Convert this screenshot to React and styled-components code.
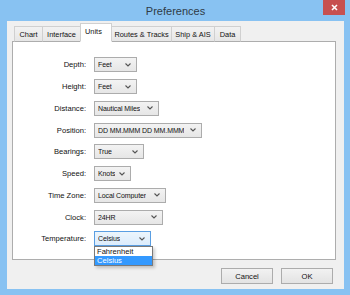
import styled, { createGlobalStyle } from "styled-components";

const GlobalStyle = createGlobalStyle`
  html, body {
    margin: 0;
    padding: 0;
    background: #88c2f2;
  }
  * {
    box-sizing: border-box;
  }
`;

const tabs = ["Chart", "Interface", "Units", "Routes & Tracks", "Ship & AIS", "Data"];
const tabWidths = [29, 39, 32, 61, 44, 27];

const rows = [
  { label: "Depth:", value: "Feet", width: 43 },
  { label: "Height:", value: "Feet", width: 43 },
  { label: "Distance:", value: "Nautical Miles", width: 65 },
  { label: "Position:", value: "DD MM.MMM DD MM.MMM", width: 108 },
  { label: "Bearings:", value: "True", width: 50 },
  { label: "Speed:", value: "Knots", width: 37 },
  { label: "Time Zone:", value: "Local Computer", width: 72 },
  { label: "Clock:", value: "24HR", width: 69 },
  { label: "Temperature:", value: "Celsius", width: 57, open: true },
];

const Chevron = () => (
  <ChevronIcon width="6" height="4" viewBox="0 0 6 4">
    <path d="M0.5 0.5 L3 3 L5.5 0.5" fill="none" stroke="#555" strokeWidth="1.1" />
  </ChevronIcon>
);

const App = () => {
  return (
    <>
      <GlobalStyle />
      <Window>
        <TitleBar>
          <Title>Preferences</Title>
          <CloseButton>
            <svg width="7" height="7" viewBox="0 0 7 7">
              <path d="M1 1 L6 6 M6 1 L1 6" stroke="#fff" strokeWidth="1.6" />
            </svg>
          </CloseButton>
        </TitleBar>
        <Client>
          <TabStrip>
            {tabs.map((t, i) => (
              <Tab key={t} $active={t === "Units"} $w={tabWidths[i]}>
                {t}
              </Tab>
            ))}
          </TabStrip>
          <Panel>
            <Form>
              {rows.map((r) => (
                <Row key={r.label}>
                  <Label>{r.label}</Label>
                  <SelectWrap>
                    <Select $w={r.width} $focus={r.open}>
                      <SelectText>{r.value}</SelectText>
                      <Chevron />
                    </Select>
                    {r.open && (
                      <DropList>
                        <Option>Fahrenheit</Option>
                        <Option $selected>Celsius</Option>
                      </DropList>
                    )}
                  </SelectWrap>
                </Row>
              ))}
            </Form>
          </Panel>
          <ButtonRow>
            <Button>Cancel</Button>
            <Button>OK</Button>
          </ButtonRow>
        </Client>
      </Window>
    </>
  );
};

export default App;

const Window = styled.div`
  width: 350px;
  height: 295px;
  background: #88c2f2;
  padding: 0 6px 6px 7px;
  display: flex;
  flex-direction: column;
  font-family: "Liberation Sans", Arial, sans-serif;
`;

const TitleBar = styled.div`
  position: relative;
  height: 21px;
  display: flex;
  align-items: center;
  justify-content: center;
`;

const Title = styled.div`
  font-size: 11px;
  color: #2f3a45;
  padding-top: 1px;
`;

const CloseButton = styled.div`
  position: absolute;
  top: 0;
  right: -1px;
  width: 22px;
  height: 15px;
  background: #c75050;
  display: flex;
  align-items: center;
  justify-content: center;
`;

const Client = styled.div`
  flex: 1;
  background: #f0f0f0;
  padding: 2px 8px 0 5px;
  display: flex;
  flex-direction: column;
`;

const TabStrip = styled.div`
  display: flex;
  align-items: flex-end;
  height: 19px;
  padding-left: 3px;
  position: relative;
  z-index: 1;
  margin-bottom: -1px;
`;

const Tab = styled.div`
  width: ${(p) => p.$w}px;
  height: ${(p) => (p.$active ? 19 : 16)}px;
  border: 1px solid #d0d0d0;
  border-bottom: ${(p) => (p.$active ? "1px solid #fff" : "1px solid #adadad")};
  margin-left: -1px;
  background: ${(p) => (p.$active ? "#fff" : "linear-gradient(#f2f2f2, #e6e6e6)")};
  font-size: 7.4px;
  color: #111;
  display: flex;
  justify-content: ${(p) => (p.$active ? "flex-start" : "center")};
  align-items: ${(p) => (p.$active ? "flex-start" : "center")};
  padding: ${(p) => (p.$active ? "3px 0 0 4px" : "0")};
  white-space: nowrap;
  position: relative;
  z-index: ${(p) => (p.$active ? 2 : 1)};
`;

const Panel = styled.div`
  height: 219px;
  background: #fff;
  border: 1px solid #adadad;
  padding: 12px 0 0 0;
`;

const Form = styled.div`
  display: flex;
  flex-direction: column;
`;

const Row = styled.div`
  height: 21.75px;
  display: grid;
  grid-template-columns: 73px auto;
  column-gap: 8px;
  align-items: center;
`;

const Label = styled.div`
  text-align: right;
  font-size: 7.6px;
  color: #111;
  white-space: nowrap;
`;

const SelectWrap = styled.div`
  position: relative;
`;

const Select = styled.div`
  width: ${(p) => p.$w}px;
  height: 15px;
  border: 1px solid ${(p) => (p.$focus ? "#5a9ee2" : "#acacac")};
  background: ${(p) =>
    p.$focus ? "linear-gradient(#ecf5fc, #dcecfc)" : "linear-gradient(#f3f3f3, #e6e6e6)"};
  display: flex;
  align-items: center;
  justify-content: space-between;
  gap: 3px;
  padding: 0 5px 0 3px;
  font-size: 7px;
  letter-spacing: -0.1px;
  color: #111;
  white-space: nowrap;
`;

const SelectText = styled.span`
  overflow: hidden;
`;

const ChevronIcon = styled.svg`
  flex-shrink: 0;
`;

const DropList = styled.div`
  position: absolute;
  top: 15px;
  left: 0;
  width: 59px;
  background: #fff;
  border: 1px solid #7a7a7a;
  box-shadow: 2px 2px 3px rgba(0, 0, 0, 0.2);
  z-index: 5;
`;

const Option = styled.div`
  height: 9px;
  line-height: 9px;
  font-size: 7.6px;
  padding-left: 2px;
  background: ${(p) => (p.$selected ? "#3399ff" : "#fff")};
  color: ${(p) => (p.$selected ? "#fff" : "#111")};
`;

const ButtonRow = styled.div`
  display: flex;
  justify-content: flex-end;
  gap: 8px;
  margin-top: 8px;
  padding-right: 3px;
`;

const Button = styled.div`
  width: 52px;
  height: 16px;
  border: 1px solid #acacac;
  background: linear-gradient(#f2f2f2, #e3e3e3);
  display: flex;
  align-items: center;
  justify-content: center;
  font-size: 7.6px;
  color: #111;
`;
